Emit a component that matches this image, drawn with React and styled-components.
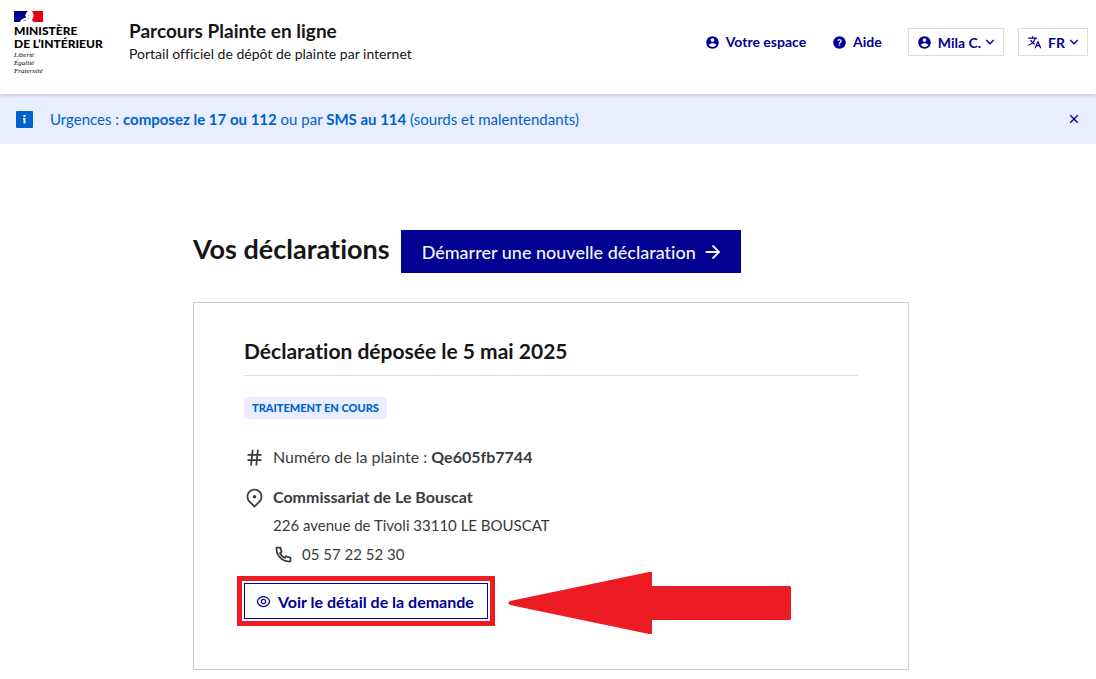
import React from "react"
import styled, { createGlobalStyle } from "styled-components"
import {
  RiAccountCircleFill,
  RiArrowDownSLine,
  RiArrowRightLine,
  RiCloseLine,
  RiEyeLine,
  RiHashtag,
  RiMapPin2Line,
  RiPhoneLine,
  RiQuestionFill,
  RiTranslate2,
} from "react-icons/ri"

const GlobalStyle = createGlobalStyle`
  * {
    box-sizing: border-box;
  }
  body {
    margin: 0;
    background: #ffffff;
    color: #3a3a3a;
    font-family: Lato, "Open Sans", sans-serif;
    font-size: 15px;
    font-variant-ligatures: none;
    line-height: 24px;
  }
  h1, h2, p {
    margin: 0;
  }
  button {
    font-family: inherit;
    cursor: pointer;
  }
  svg {
    flex: none;
  }
`

const PageHeader = styled.header`
  position: relative;
  display: flex;
  align-items: flex-start;
  min-height: 94px;
  padding: 10px 8px 18px 14px;
  background: #ffffff;
  box-shadow: 0 1px 4px rgba(0, 0, 18, 0.2);
`

const Brand = styled.a`
  display: block;
  width: 115px;
  color: #000000;
  text-decoration: none;
`

const Flag = styled.svg`
  display: block;
  width: 29px;
  height: 11px;
  margin: 1px 0 2px;
`

const Ministry = styled.span`
  display: block;
  font-size: 12px;
  font-weight: 900;
  line-height: 13px;
  white-space: nowrap;
`

const Motto = styled.span`
  display: block;
  margin-top: 1px;
  font-family: "Liberation Serif", serif;
  font-size: 7px;
  font-style: italic;
  line-height: 8px;
`

const Service = styled.div`
  padding-top: 9px;
  color: #161616;
`

const ServiceName = styled.p`
  font-size: 19px;
  font-weight: 700;
  line-height: 24px;
`

const ServiceTagline = styled.p`
  font-size: 14px;
  line-height: 22px;
`

const Tools = styled.nav`
  display: flex;
  align-items: center;
  gap: 14px;
  margin-left: auto;
  padding-top: 18px;
`

const toolStyle = `
  display: flex;
  align-items: center;
  height: 28px;
  color: #000091;
  font-size: 14px;
  font-weight: 700;
  white-space: nowrap;
  text-decoration: none;
`

const ToolLink = styled.a`
  ${toolStyle}
  margin-right: 11px;
`

const ToolButton = styled.button`
  ${toolStyle}
  padding: 0 5px 0 8px;
  background: #ffffff;
  border: 1px solid #dddddd;
`

const ToolLabel = styled.span`
  margin: 0 1px 0 6px;
`

const Notice = styled.div`
  display: flex;
  align-items: center;
  gap: 17px;
  height: 50px;
  padding: 0 14px 0 16px;
  background: #e8edff;
  color: #0063cb;
`

const NoticeText = styled.p`
  flex: 1;
`

const CloseButton = styled.button`
  display: flex;
  padding: 0;
  background: none;
  border: 0;
  color: #000091;
`

const Main = styled.main`
  max-width: 730px;
  margin: 0 auto;
  padding: 86px 4px 9px 10px;
`

const TitleRow = styled.div`
  display: flex;
  align-items: flex-start;
  gap: 11px;
  margin-bottom: 29px;
`

const Title = styled.h1`
  color: #161616;
  font-size: 27px;
  font-weight: 700;
  line-height: 38px;
  white-space: nowrap;
`

const StartLink = styled.a`
  display: flex;
  align-items: center;
  gap: 6px;
  height: 43px;
  padding: 0 17px 0 21px;
  background: #000091;
  color: #f5f5fe;
  font-size: 18px;
  font-weight: 500;
  text-decoration: none;
  white-space: nowrap;
`

const Card = styled.article`
  padding: 32px 50px 35px;
  border: 1px solid #cecece;
`

const CardTitle = styled.h2`
  padding-bottom: 8px;
  border-bottom: 1px solid #dddddd;
  color: #161616;
  font-size: 21px;
  font-weight: 700;
  line-height: 32px;
`

const Badge = styled.p`
  display: table;
  margin: 21px 0 24px;
  padding: 0 8px;
  background: #e8edff;
  border-radius: 4px;
  color: #0063cb;
  font-size: 11px;
  font-weight: 900;
  line-height: 22px;
  text-transform: uppercase;
`

const InfoLine = styled.div`
  display: flex;
  align-items: center;
  gap: 8px;
  margin-top: ${(props) => (props.$spaced ? "12px" : "0")};
  font-size: 16px;
  line-height: 28px;
`

const Address = styled.p`
  padding-left: 29px;
  line-height: 28px;
`

const PhoneLine = styled(InfoLine)`
  margin-left: 29px;
  font-size: 15px;
  line-height: 30px;
`

const DetailArea = styled.div`
  display: flex;
  align-items: center;
  gap: 13px;
  margin: -1px 0 0 -7px;
`

const Highlight = styled.div`
  padding: 2px;
  border: 5px solid #ed1c24;
`

const DetailButton = styled.button`
  display: flex;
  align-items: center;
  gap: 7px;
  height: 36px;
  padding: 0 13px 0 11px;
  background: #ffffff;
  border: 1px solid #000091;
  color: #000091;
  font-size: 16px;
  font-weight: 700;
  white-space: nowrap;
`

function FrenchFlag() {
  return (
    <Flag viewBox="0 0 29 11" aria-hidden="true">
      <path fill="#ffffff" d="M0 0h29v11H0z" />
      <path fill="#000091" d="M0 0h14l-1.600 1.400-.4 1.600-1 1.600.9.6-.3 1.600-1.600.5-1.800.8-1.600 1.500-.6 1.400H0z" />
      <path fill="#e1000f" d="M17.500 0H29v11h-9.600l-1.200-1.800.3-1.600 1-1.800.1-2.400-.8-2z" />
      <path fill="#7d82c4" d="M9 9.600l2.600-1 1.200.6-2.200.9zM14.200 4.200l1 .2-.4.8-.8-.2zM13.600 7.600l1.800-.6-.6 1.300z" />
    </Flag>
  )
}

function InfoIcon() {
  return (
    <svg width="17" height="17" viewBox="0 0 17 17" aria-hidden="true">
      <rect width="17" height="17" rx="1" fill="#0063cb" />
      <path fill="#e8edff" d="M7.500 4h2v2h-2zM7 7h2.500v5.500h-2v-4H7z" />
    </svg>
  )
}

function Arrow() {
  return (
    <svg width="283" height="66" viewBox="0 0 283 66" aria-hidden="true">
      <path fill="#ed1c24" d="M2 33 141 4h3v14h138l1 1v32l-1 1H144v14h-3L2 37l-2-2z" />
    </svg>
  )
}

export default function App() {
  return (
    <>
      <GlobalStyle />
      <PageHeader>
        <Brand href="#">
          <FrenchFlag />
          <Ministry>MINISTÈRE</Ministry>
          <Ministry>DE L’INTÉRIEUR</Ministry>
          <Motto>Liberté<br />Égalité<br />Fraternité</Motto>
        </Brand>
        <Service>
          <ServiceName>Parcours Plainte en ligne</ServiceName>
          <ServiceTagline>Portail officiel de dépôt de plainte par internet</ServiceTagline>
        </Service>
        <Tools>
          <ToolLink href="#"><RiAccountCircleFill size={15} /><ToolLabel>Votre espace</ToolLabel></ToolLink>
          <ToolLink href="#"><RiQuestionFill size={15} /><ToolLabel>Aide</ToolLabel></ToolLink>
          <ToolButton>
            <RiAccountCircleFill size={15} />
            <ToolLabel>Mila C.</ToolLabel>
            <RiArrowDownSLine size={16} />
          </ToolButton>
          <ToolButton>
            <RiTranslate2 size={15} />
            <ToolLabel>FR</ToolLabel>
            <RiArrowDownSLine size={16} />
          </ToolButton>
        </Tools>
      </PageHeader>

      <Notice>
        <InfoIcon />
        <NoticeText>
          Urgences : <b>composez le 17 ou 112</b> ou par <b>SMS au 114</b> (sourds et malentendants)
        </NoticeText>
        <CloseButton aria-label="Fermer"><RiCloseLine size={16} /></CloseButton>
      </Notice>

      <Main>
        <TitleRow>
          <Title>Vos déclarations</Title>
          <StartLink href="#">Démarrer une nouvelle déclaration<RiArrowRightLine size={22} /></StartLink>
        </TitleRow>
        <Card>
          <CardTitle>Déclaration déposée le 5 mai 2025</CardTitle>
          <Badge>Traitement en cours</Badge>
          <InfoLine>
            <RiHashtag size={21} />
            <p>Numéro de la plainte : <b>Qe605fb7744</b></p>
          </InfoLine>
          <InfoLine $spaced>
            <RiMapPin2Line size={21} />
            <b>Commissariat de Le Bouscat</b>
          </InfoLine>
          <Address>226 avenue de Tivoli 33110 LE BOUSCAT</Address>
          <PhoneLine>
            <RiPhoneLine size={21} />
            <span>05 57 22 52 30</span>
          </PhoneLine>
          <DetailArea>
            <Highlight>
              <DetailButton><RiEyeLine size={15} />Voir le détail de la demande</DetailButton>
            </Highlight>
            <Arrow />
          </DetailArea>
        </Card>
      </Main>
    </>
  )
}
